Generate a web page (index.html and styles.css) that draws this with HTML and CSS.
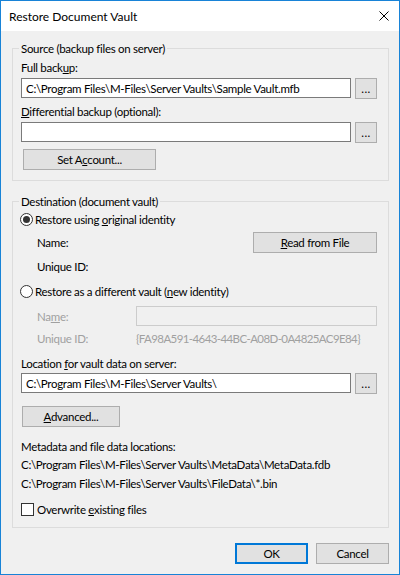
FILE: index.html
```html
<!DOCTYPE html>
<html>
<head>
<meta charset="utf-8">
<title>Restore Document Vault</title>
<link rel="stylesheet" href="styles.css">
</head>
<body>
<div class="window">
  <div class="titlebar">
    <span class="title">Restore Document Vault</span>
    <svg class="close" width="10" height="10" viewBox="0 0 10 10"><path d="M0.5 0.5 L9.5 9.5 M9.5 0.5 L0.5 9.5" stroke="#000" stroke-width="1" fill="none"/></svg>
  </div>
  <div class="client">
    <fieldset class="group source">
      <legend>Source (backup files on server)</legend>
      <div class="label first">Full back<u>u</u>p:</div>
      <div class="field-row after-label">
        <input class="text" type="text" value="C:\Program Files\M-Files\Server Vaults\Sample Vault.mfb" readonly>
        <button class="btn browse">...</button>
      </div>
      <div class="label gap5"><u>D</u>ifferential backup (optional):</div>
      <div class="field-row after-label">
        <input class="text" type="text" value="" readonly>
        <button class="btn browse">...</button>
      </div>
      <button class="btn account">Set A<u>c</u>count...</button>
    </fieldset>

    <fieldset class="group dest">
      <legend>Destination (document vault)</legend>
      <div class="option first-opt">
        <svg class="radio" width="13" height="13" viewBox="0 0 13 13"><circle cx="6.5" cy="6.5" r="6" fill="#fff" stroke="#333" stroke-width="1"/><circle cx="6.5" cy="6.5" r="3.5" fill="#333"/></svg>
        <span>Restore using <u>o</u>riginal identity</span>
      </div>
      <div class="id-row name-row">
        <span class="id-label">Name:</span>
        <button class="btn read"><u>R</u>ead from File</button>
      </div>
      <div class="id-row uid-row">
        <span class="id-label">Unique ID:</span>
      </div>
      <div class="option second-opt">
        <svg class="radio" width="13" height="13" viewBox="0 0 13 13"><circle cx="6.5" cy="6.5" r="6" fill="#fff" stroke="#333" stroke-width="1"/></svg>
        <span>Restore as a different vault (<u>n</u>ew identity)</span>
      </div>
      <div class="id-row disabled dname-row">
        <span class="id-label">Na<u>m</u>e:</span>
        <input class="text off" type="text" value="" readonly>
      </div>
      <div class="id-row disabled duid-row">
        <span class="id-label">Unique ID:</span>
        <span class="guid">{FA98A591-4643-44BC-A08D-0A4825AC9E84}</span>
      </div>
      <div class="label loc">Location <u>f</u>or vault data on server:</div>
      <div class="field-row after-label2">
        <input class="text" type="text" value="C:\Program Files\M-Files\Server Vaults\" readonly>
        <button class="btn browse">...</button>
      </div>
      <button class="btn advanced"><u>A</u>dvanced...</button>
      <div class="label meta">Metadata and file data locations:</div>
      <div class="label path1">C:\Program Files\M-Files\Server Vaults\MetaData\MetaData.fdb</div>
      <div class="label path2">C:\Program Files\M-Files\Server Vaults\FileData\*.bin</div>
      <div class="option check-row">
        <svg class="check" width="13" height="13" viewBox="0 0 13 13"><rect x="0.5" y="0.5" width="12" height="12" fill="#fff" stroke="#333" stroke-width="1"/></svg>
        <span>Overwrite <u>e</u>xisting files</span>
      </div>
    </fieldset>

    <div class="buttons">
      <button class="btn dlg default">OK</button>
      <button class="btn dlg">Cancel</button>
    </div>
  </div>
</div>
</body>
</html>
```

FILE: styles.css
```css
* { box-sizing: border-box; }
html, body { margin: 0; padding: 0; background: #fff; }
body {
  font-family: "Lato", "Liberation Sans", sans-serif;
  font-size: 11.5px;
  letter-spacing: -0.3px;
  color: #000;
}
.window {
  width: 400px;
  height: 575px;
  border: 1px solid #1883d7;
  display: flex;
  flex-direction: column;
  background: #f0f0f0;
}
.titlebar {
  height: 30px;
  flex: none;
  background: #fff;
  display: flex;
  align-items: center;
  padding: 0 10px 0 8px;
}
.title { font-size: 12px; letter-spacing: 0; line-height: 15px; padding-top: 1px; }
.close { margin-left: auto; display: block; }
.client {
  flex: 1;
  padding: 0 10px 0 11px;
}
u { text-decoration: underline; text-underline-offset: 1px; text-decoration-thickness: 1px; }

.group {
  margin: 0;
  border: 1px solid #dcdcdc;
  padding: 0 11px 10px 8px;
  min-width: 0;
}
.group legend {
  padding: 0 2px;
  margin-left: -2px;
  line-height: 15px;
  height: 15px;
}
.source { margin-top: 10px; }
.dest { margin-top: 13px; }

.label { height: 15px; line-height: 15px; white-space: nowrap; }
.label.first { margin-top: 4px; }
.label.gap5 { margin-top: 5px; }
.field-row { display: flex; align-items: flex-start; gap: 4px; }
.field-row.after-label { margin-top: 3px; }
.field-row.after-label2 { margin-top: 2px; }

.text {
  flex: 1;
  min-width: 0;
  height: 20px;
  border: 1px solid #7a7a7a;
  background: #fff;
  font: inherit;
  letter-spacing: inherit;
  color: #000;
  padding: 0 4px;
  margin: 0;
  outline: none;
}
.text.off { border-color: #cccccc; background: #f0f0f0; }

.btn {
  font: inherit;
  letter-spacing: inherit;
  color: #000;
  background: #e1e1e1;
  border: 1px solid #adadad;
  height: 21px;
  margin: 0;
  padding: 0;
  display: block;
  line-height: 17px;
}
.browse { width: 22px; flex: none; line-height: 19px; letter-spacing: 0.5px; }
.account { width: 133px; margin: 6px 0 0 2px; }

.option { display: flex; align-items: center; gap: 2px; height: 16px; margin-left: -1px; }
.radio, .check { display: block; flex: none; }
.first-opt { margin-top: 2px; }
.second-opt { margin-top: 9px; }
.check-row { margin-top: 11px; height: 15px; margin-left: 0; gap: 3px; }

.id-row { display: flex; align-items: center; padding-left: 16px; }
.id-label { width: 99px; flex: none; line-height: 15px; white-space: nowrap; }
.name-row { margin-top: 5px; height: 21px; }
.read { width: 124px; margin-left: auto; }
.uid-row { margin-top: 6px; height: 15px; }
.disabled { color: #a0a0a0; }
.dname-row { margin-top: 7px; height: 20px; }
.duid-row { margin-top: 5px; height: 15px; }
.guid { white-space: nowrap; line-height: 15px; letter-spacing: -0.6px; }

.label.loc { margin-top: 10px; }
.advanced { width: 98px; margin: 12px 0 0 1px; }
.label.meta { margin-top: 12px; }
.label.path1 { margin-top: 3px; }
.label.path2 { margin-top: 4px; }

.buttons {
  display: flex;
  justify-content: flex-end;
  gap: 8px;
  margin-top: 15px;
}
.dlg { width: 73px; }
.default { border: 2px solid #0078d7; line-height: 17px; }
```
